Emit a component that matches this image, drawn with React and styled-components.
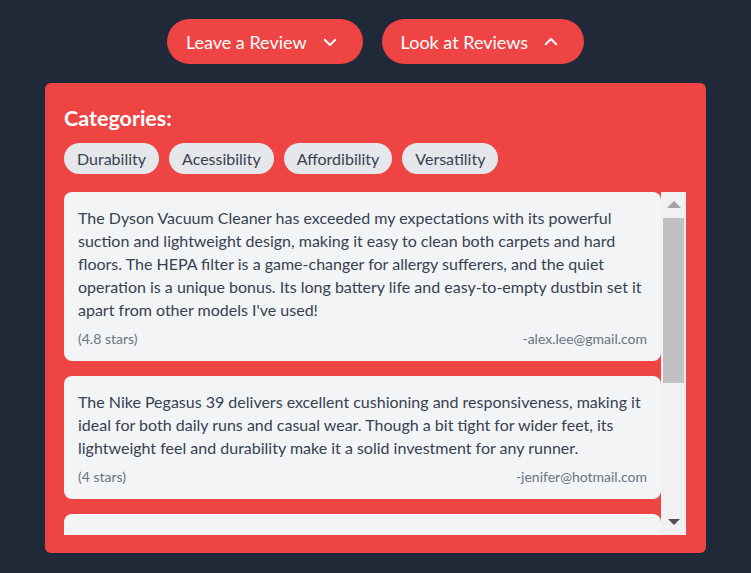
import { useState } from "react";
import styled, { createGlobalStyle } from "styled-components";

const reviews = [
  {
    id: 1,
    text: "The Dyson Vacuum Cleaner has exceeded my expectations with its powerful suction and lightweight design, making it easy to clean both carpets and hard floors. The HEPA filter is a game-changer for allergy sufferers, and the quiet operation is a unique bonus. Its long battery life and easy-to-empty dustbin set it apart from other models I've used!",
    rating: 4.8,
    email: "alex.lee@gmail.com",
  },
  {
    id: 2,
    text: "The Nike Pegasus 39 delivers excellent cushioning and responsiveness, making it ideal for both daily runs and casual wear. Though a bit tight for wider feet, its lightweight feel and durability make it a solid investment for any runner.",
    rating: 4,
    email: "jenifer@hotmail.com",
  },
  {
    id: 3,
    text: "This Spider-Man figure captures every detail from the intricate web-lining to the dynamic pose, and the paint job is crisp and vibrant. It stands sturdy on the shelf and is a must-have for any collector.",
    rating: 5,
    email: "mike.t@yahoo.com",
  },
];

const categories = ["Durability", "Acessibility", "Affordibility", "Versatility"];

const GlobalStyle = createGlobalStyle`
  * { box-sizing: border-box; }
  body {
    margin: 0;
    background: #1f2937;
    font-family: Lato, "Open Sans", sans-serif;
  }
`;

function Chevron({ up }) {
  return (
    <svg width="18" height="18" viewBox="0 0 24 24" fill="none" stroke="currentColor" strokeWidth="2.6" strokeLinecap="round" strokeLinejoin="round">
      {up ? <path d="M5 15l7-7 7 7" /> : <path d="M5 9l7 7 7-7" />}
    </svg>
  );
}

// little triangles for the scroll buttons
function Arrow({ down, muted }) {
  return (
    <svg width="14" height="8" viewBox="0 0 14 8">
      <path d={down ? "M1 1 L13 1 L7 7 Z" : "M0 7 L7 0 L14 7 Z"} fill={muted ? "#a3a3a3" : "#505050"} />
    </svg>
  );
}

export default function App() {
  const [open, setOpen] = useState("reviews");

  return (
    <Page>
      <GlobalStyle />
      <ButtonRow>
        <ToggleButton onClick={() => setOpen("leave")}>
          Leave a Review
          <Chevron up={open === "leave"} />
        </ToggleButton>
        <ToggleButton onClick={() => setOpen("reviews")}>
          Look at Reviews
          <Chevron up={open === "reviews"} />
        </ToggleButton>
      </ButtonRow>

      <Panel>
        <Heading>Categories:</Heading>
        <ChipRow>
          {categories.map((c) => (
            <Chip key={c}>{c}</Chip>
          ))}
        </ChipRow>

        <ReviewArea>
          <ReviewList>
            {reviews.map((r) => (
              <ReviewCard key={r.id}>
                <ReviewText>{r.text}</ReviewText>
                <ReviewMeta>
                  <span>({r.rating} stars)</span>
                  <span>-{r.email}</span>
                </ReviewMeta>
              </ReviewCard>
            ))}
          </ReviewList>

          <ScrollTrack>
            <ScrollButton>
              <Arrow muted />
            </ScrollButton>
            <ScrollThumb />
            <ScrollButton>
              <Arrow down />
            </ScrollButton>
          </ScrollTrack>
        </ReviewArea>
      </Panel>
    </Page>
  );
}

const Page = styled.div`
  min-height: 100vh;
  padding: 19px 45px 20px;
  display: flex;
  flex-direction: column;
  align-items: center;
`;

const ButtonRow = styled.div`
  display: flex;
  gap: 19px;
  margin-bottom: 19px;
`;

const ToggleButton = styled.button`
  display: flex;
  align-items: center;
  gap: 14px;
  height: 45px;
  padding: 0 24px 0 19px;
  border: none;
  border-radius: 999px;
  background: #ef4444;
  color: #fff;
  font-family: inherit;
  font-size: 18px;
  cursor: pointer;
`;

const Panel = styled.section`
  width: 661px;
  background: #ef4444;
  border-radius: 6px;
  padding: 21px 20px 18px 19px;
`;

const Heading = styled.h2`
  margin: 0 0 11px;
  color: #fff;
  font-size: 21.5px;
  font-weight: 700;
  line-height: 28px;
`;

const ChipRow = styled.div`
  display: flex;
  gap: 10px;
  margin-bottom: 18px;
`;

const Chip = styled.span`
  height: 31px;
  padding: 0 13px;
  display: flex;
  align-items: center;
  border-radius: 999px;
  background: #e5e7eb;
  color: #374151;
  font-size: 16px;
`;

const ReviewArea = styled.div`
  height: 343px;
  display: flex;
`;

const ReviewList = styled.div`
  flex: 1;
  overflow: hidden;
  display: flex;
  flex-direction: column;
  gap: 15px;
`;

const ScrollTrack = styled.div`
  width: 25px;
  display: flex;
  flex-direction: column;
  background: #f1f1f1;
`;

const ScrollButton = styled.div`
  height: 26px;
  display: flex;
  align-items: center;
  justify-content: center;
`;

const ScrollThumb = styled.div`
  height: 165px;
  margin: 0 2px auto;
  background: #c1c1c1;
`;

const ReviewCard = styled.article`
  flex-shrink: 0;
  background: #f3f4f6;
  border-radius: 8px;
  padding: 14px 14px 12px;
`;

const ReviewText = styled.p`
  margin: 0;
  color: #374151;
  font-size: 16px;
  line-height: 23px;
`;

const ReviewMeta = styled.div`
  display: flex;
  justify-content: space-between;
  margin-top: 8px;
  color: #6b7280;
  font-size: 14px;
  line-height: 20px;
`;
